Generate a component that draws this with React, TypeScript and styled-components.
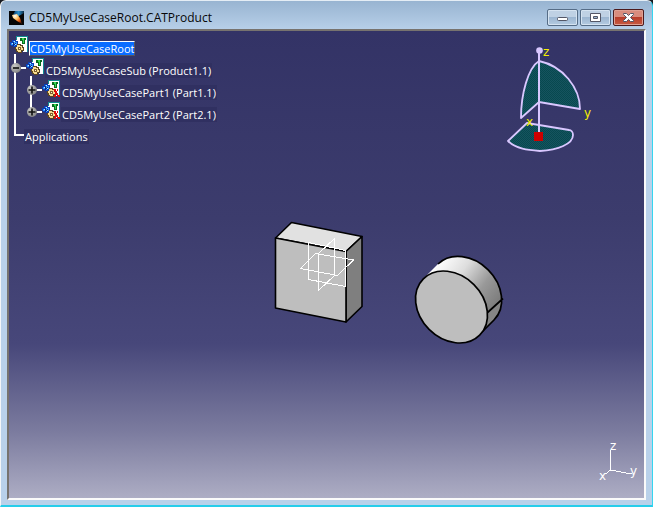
import React, { ReactNode } from "react";
import styled, { createGlobalStyle } from "styled-components";

const GlobalStyle = createGlobalStyle`
  * { box-sizing: border-box; }
  body {
    margin: 0;
    background: #16191f;
    font-family: "Open Sans", "Noto Sans", sans-serif;
  }
`;

const Frame = styled.main`
  display: flex;
  flex-direction: column;
  min-height: 100vh;
  padding: 0 6px 5px;
  border: solid;
  border-width: 1px 1px 2px 1px;
  border-color: #e4edf5 #35d5f0 #27cdea #f4f6f8;
  border-radius: 6px 6px 0 0;
  background: linear-gradient(#98b4d1, #b9d1ea 30px);
`;

const TitleBar = styled.header`
  display: flex;
  align-items: center;
  height: 28px;
  padding: 5px 2px 0;
`;

const Title = styled.h1`
  flex: 1;
  margin: 0 0 0 5px;
  font-size: 12px;
  line-height: 20px;
  font-weight: 400;
  color: #080808;
  white-space: nowrap;
`;

const Controls = styled.div`
  display: flex;
  gap: 2px;
`;

const WindowButton = styled.button<{ $close?: boolean }>`
  display: flex;
  align-items: center;
  justify-content: center;
  width: 31px;
  height: 17px;
  padding: 0;
  border: 1px solid ${(p) => (p.$close ? "#4c1a1c" : "#566d87")};
  border-radius: 2px;
  box-shadow: inset 0 0 0 1px ${(p) => (p.$close ? "#dfa093" : "#d5e3f1")};
  background: ${(p) =>
    p.$close
      ? "linear-gradient(#d98c7d 0 45%, #b93d2a 50%, #c75b42)"
      : "linear-gradient(#bfd1e4 0 45%, #9cb6d1 50%, #b5cbe1)"};
`;

const Scene = styled.section`
  position: relative;
  flex: 1;
  min-height: 300px;
  overflow: hidden;
  border: 2px solid;
  border-color: #77736f #fafafa #fafafa #77736f;
  background: linear-gradient(#333366, #3c3c6d 40%, #47477a 67%, #7c7c9f 86%, #adadc4);
`;

const CompassBox = styled.svg`
  position: absolute;
  top: 9px;
  right: 44px;
`;

const PartsBox = styled.svg`
  position: absolute;
  top: 40%;
  left: 41%;
`;

const AxisBox = styled.svg`
  position: absolute;
  right: 4px;
  bottom: 12px;
`;

const Tree = styled.nav`
  position: relative;
  width: max-content;
  padding: 5px 0 0 1px;
`;

const Row = styled.div`
  display: flex;
  align-items: flex-start;
  height: 22px;
`;

const Branch = styled.ul<{ $indent: number }>`
  position: relative;
  margin: 0;
  padding: 0 0 0 ${(p) => p.$indent}px;
  list-style: none;

  &::before {
    content: "";
    position: absolute;
    top: -4px;
    bottom: 10px;
    left: ${(p) => p.$indent + 3}px;
    width: 2px;
    background: #fff;
  }
`;

const Label = styled.span<{ $selected?: boolean }>`
  margin: 5px 0 0 1px;
  height: 15px;
  border: 1px solid;
  border-color: ${(p) => (p.$selected ? "#fff #55555e #55555e #fff" : "transparent")};
  background: ${(p) => (p.$selected ? "#0a6cff" : "#303061")};
  font-size: 11px;
  line-height: 13px;
  color: #fff;
  white-space: nowrap;
`;

const Expander = styled.button`
  position: relative;
  display: flex;
  width: 10px;
  height: 10px;
  margin-top: 5px;
  padding: 0;
  border: 0;
  border-radius: 50%;
  background: radial-gradient(circle at 35% 30%, #c8c8c8, #8f8f8f 65%, #6a6a6a);
`;

const Stub = styled.span`
  width: 5px;
  height: 2px;
  margin-top: 9px;
  background: #fff;
`;

const Elbow = styled.span`
  width: 10px;
  height: 2px;
  margin: 10px 0 0 3px;
  background: #fff;
`;

const LeafLabel = styled(Label)`
  margin: 5px 0 0;
`;

function ProductIcon({ part }: { part?: boolean }) {
  return (
    <svg width="18" height="18" viewBox="0 0 18 18" aria-hidden="true" shapeRendering="crispEdges">
      <path d="M6 0h12v16h-5L6 9z" fill="#fff" />
      <path d="M6.500 4V.5h11V16" fill="none" stroke="#128b91" />
      <path d="M10 2h6v2h-1v4h-3V5h-2z" fill="#086c1f" />
      <path d="M12 2h2v5h-1V4h-1z" fill="#35d750" />
      <path d="M2 4h4v1h2v5H6v1H3v-1H1V9H0V6h2z" fill="#0a3fb8" />
      <path d="M3 5h2v1h2v3H5v1H3V9H1V7h2z" fill="#2f93ff" />
      <path d="M3 6h1v2h1V7h1v2H4v1H3z" fill="#0a2c8a" />
      <path d="M4 5h1v1H4zM2 7h1v1H2zM5 8h1v1H5z" fill="#b8f0ff" />
      <path d="M7 8h4v1h2v2h1v4h-2v2H8v-1H6v-2H5v-3h2z" fill="#5c4520" />
      <path d="M7 9h3v1h2v2h1v2h-2v2H8v-1H7v-2H6v-2h1z" fill="#f7dc91" />
      <path d="M8 11h3v3H8z" fill="#80602d" />
      <path d="M9 12h1v1H9z" fill="#fff7d8" />
      {part && <path d="M12 9h2v2h1v2h1v2h2v2h-2v-1h-1v-1h-1v2h-2v-2h1v-3h-1zM15 9h1v2h-1z" fill="#e20808" />}
    </svg>
  );
}

function Toggle({ open, name }: { open?: boolean; name: string }) {
  return (
    <>
      <Expander aria-label={(open ? "Collapse " : "Expand ") + name} aria-expanded={!!open}>
        <svg width="10" height="10" viewBox="0 0 10 10">
          <path d={open ? "M2 5h6" : "M1.500 5h7M5 1.500v7"} stroke="#111" strokeWidth="1.600" />
        </svg>
      </Expander>
      <Stub />
    </>
  );
}

function Node({ name, open, part, children }: { name: string; open?: boolean; part?: boolean; children?: ReactNode }) {
  return (
    <li>
      <Row>
        <Toggle open={open} name={name} />
        <ProductIcon part={part} />
        <Label>{name}</Label>
      </Row>
      {children}
    </li>
  );
}

function AppIcon() {
  return (
    <svg width="15" height="14" viewBox="0 0 15 14" aria-hidden="true">
      <defs>
        <linearGradient id="sky" x1="0" x2="1">
          <stop stopColor="#0b3a66" />
          <stop offset=".5" stopColor="#2b90cc" />
          <stop offset="1" stopColor="#0b2a44" />
        </linearGradient>
        <radialGradient id="flare" cx=".3" cy=".2" r=".9">
          <stop stopColor="#fff" />
          <stop offset=".35" stopColor="#ffc86a" />
          <stop offset=".7" stopColor="#e0560f" />
          <stop offset="1" stopColor="#4a1404" />
        </radialGradient>
      </defs>
      <path d="M0 0h15v14H0z" fill="#050607" />
      <path d="M6 0h9v2L8 6 4 4z" fill="url(#sky)" />
      <path d="m3 4 5-1 3 4 2 6-5-3-4-3z" fill="url(#flare)" />
    </svg>
  );
}

function Compass() {
  return (
    <CompassBox width="100" height="116" viewBox="500 40 100 116" role="img" aria-label="Compass">
      <defs>
        <pattern id="weave" width="2" height="2" patternUnits="userSpaceOnUse">
          <path d="M0 0h2v2H0z" fill="#16535f" />
          <path d="M0 0h1v1H0zM1 1h1v1H1z" fill="#07494f" />
        </pattern>
      </defs>
      <g fill="url(#weave)" stroke="#d9c7ff" strokeWidth="1.800" strokeLinejoin="round">
        <path d="M539 61C528 68 521 94 521 118L539 102z" />
        <path d="M539 61C563 66 580 88 580 109L539 102z" />
        <path d="M527 123 508 141C516 149 528 150 540 151 558 150 573 144 573 135 573 132 571 130 569 130z" />
        <path d="M539 51v84" strokeWidth="2" />
      </g>
      <circle cx="539.500" cy="50.500" r="3.300" fill="#d9c7ff" />
      <path d="M534 132h9v9h-9z" fill="#ce0000" />
      <g fill="#f6ee00" fontFamily="DejaVu Sans, sans-serif" fontSize="12">
        <text x="543" y="56">z</text>
        <text x="584" y="117">y</text>
        <text x="526" y="126">x</text>
      </g>
    </CompassBox>
  );
}

function Parts() {
  return (
    <PartsBox width="238" height="130" viewBox="269 218 238 130" role="img" aria-label="Block and cylinder">
      <defs>
        <linearGradient id="barrel" gradientUnits="userSpaceOnUse" x1="434" y1="268" x2="492" y2="310">
          <stop stopColor="#fff" />
          <stop offset=".35" stopColor="#ddd" />
          <stop offset=".7" stopColor="#999" />
          <stop offset="1" stopColor="#7d7d7d" />
        </linearGradient>
      </defs>
      <g stroke="#000" strokeWidth="1.600" strokeLinejoin="round">
        <path d="M275.500 238 291.500 222.500 362 236.500 346 251.500z" fill="#e1e1e1" />
        <path d="M346 251.500 362 236.500V306.500L346 322z" fill="#7f7f7f" />
        <path d="M275.500 238 346 251.500V322L275.500 308z" fill="#bebebe" />
      </g>
      <g fill="none" stroke="#fff" shapeRendering="crispEdges">
        <path d="M308.500 242.500v37l37 7v-36z" />
        <path d="M318.500 253.500l16-15v37l-16 15z" />
        <path d="M300.500 268.500l15-15 38 6.500-16 15.500z" />
      </g>
      <path d="M423 279 438 264A39.600 31.700 45 0 1 494 320L479 335z" fill="url(#barrel)" />
      <path d="M487 313 502 299Q501 312 494 320L479 334Q487 326 487 313z" fill="#858585" />
      <g fill="none" stroke="#000" strokeWidth="1.700">
        <path d="M438 264A39.600 31.700 45 0 1 494 320L479 335M487 313 503 298.500" />
        <ellipse cx="451.500" cy="307" rx="39.800" ry="31.700" transform="rotate(45 451.500 307)" fill="#bebebe" />
      </g>
    </PartsBox>
  );
}

function Axis() {
  return (
    <AxisBox width="42" height="48" viewBox="598 438 42 48" role="img" aria-label="Axis system">
      <path d="M610.500 450v20l21 4M610.500 470l-5 4" fill="none" stroke="#fff" shapeRendering="crispEdges" />
      <g fill="#fff" fontFamily="DejaVu Sans, sans-serif" fontSize="12">
        <text x="610" y="450">z</text>
        <text x="630" y="475">y</text>
        <text x="599" y="480">x</text>
      </g>
    </AxisBox>
  );
}

export default function App() {
  return (
    <>
      <GlobalStyle />
      <Frame>
        <TitleBar>
          <AppIcon />
          <Title>CD5MyUseCaseRoot.CATProduct</Title>
          <Controls>
            <WindowButton aria-label="Minimize">
              <svg width="13" height="11" viewBox="0 0 13 11">
                <rect x="1.500" y="5.500" width="10" height="3" rx="1" fill="#fff" stroke="#535666" />
              </svg>
            </WindowButton>
            <WindowButton aria-label="Maximize">
              <svg width="11" height="11" viewBox="0 0 11 11">
                <path d="M.5 1.500h10v8H.5zM3.500 4.500v2h4v-2z" fill="#fff" fillRule="evenodd" stroke="#535666" />
              </svg>
            </WindowButton>
            <WindowButton $close aria-label="Close">
              <svg width="13" height="11" viewBox="0 0 13 11">
                <path d="M1.500 1.500h3l2 2 2-2h3v1l-3 3 3 3v1h-3l-2-2-2 2h-3v-1l3-3-3-3z" fill="#fff" stroke="#535666" />
              </svg>
            </WindowButton>
          </Controls>
        </TitleBar>
        <Scene>
          <Parts />
          <Compass />
          <Axis />
          <Tree aria-label="Specification tree">
            <Row>
              <ProductIcon />
              <Label $selected>CD5MyUseCaseRoot</Label>
            </Row>
            <Branch $indent={1}>
              <Node name="CD5MyUseCaseSub (Product1.1)" open>
                <Branch $indent={16}>
                  <Node name="CD5MyUseCasePart1 (Part1.1)" part />
                  <Node name="CD5MyUseCasePart2 (Part2.1)" part />
                </Branch>
              </Node>
              <li>
                <Row>
                  <Elbow />
                  <LeafLabel>Applications</LeafLabel>
                </Row>
              </li>
            </Branch>
          </Tree>
        </Scene>
      </Frame>
    </>
  );
}
